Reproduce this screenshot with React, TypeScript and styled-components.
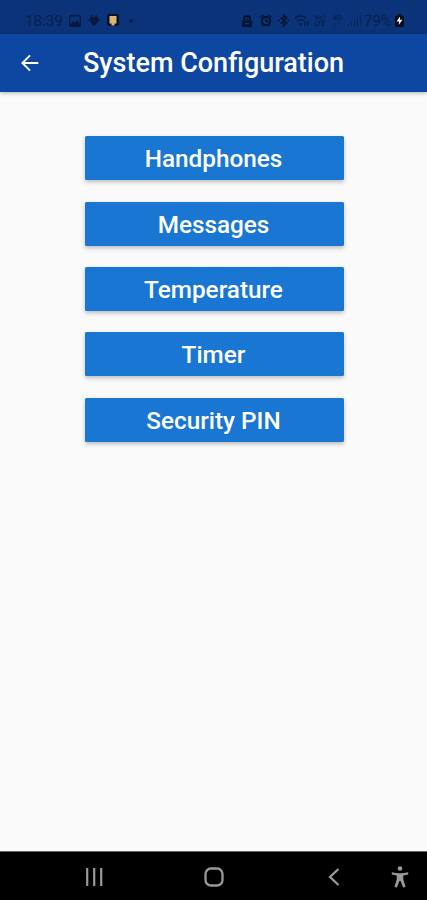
import React from "react";
import styled, { createGlobalStyle } from "styled-components";

const GlobalStyle = createGlobalStyle`
  *, *::before, *::after { box-sizing: border-box; }
  body { margin: 0; background: #fafafa; font-family: Roboto, "Liberation Sans", sans-serif; }
`;

const Screen = styled.div`
  display: flex;
  flex-direction: column;
  width: 427px;
  height: 900px;
  overflow: hidden;
  background: #fafafa;
`;

const StatusBar = styled.div`
  display: flex;
  align-items: center;
  justify-content: space-between;
  flex: none;
  height: 34px;
  padding: 7px 23px 0 25px;
  background: #0a3379;
  color: #07204d;
`;

const StatusGroup = styled.div<{ $gap: number }>`
  display: flex;
  align-items: center;
  gap: ${(p) => p.$gap}px;
`;

const StatusText = styled.span<{ $width: number }>`
  width: ${(p) => p.$width}px;
  font-size: 15.2px;
  line-height: 18px;
  white-space: nowrap;
`;

const NetworkLabel = styled.span`
  width: 14px;
  font-size: 7px;
  font-weight: 500;
  line-height: 6px;
  text-align: center;
`;

const AppBar = styled.header`
  position: relative;
  display: flex;
  align-items: center;
  flex: none;
  height: 58px;
  padding-left: 20px;
  background: #0d47a1;
  box-shadow: 0 1px 4px rgba(0, 0, 0, 0.3);
`;

const BackButton = styled.button`
  display: flex;
  width: 20px;
  padding: 0;
  border: 0;
  background: none;
`;

const Title = styled.h1`
  margin: 0 0 0 43px;
  color: #fff;
  font-size: 27px;
  font-weight: 500;
  line-height: 32px;
  white-space: nowrap;
`;

const Menu = styled.main`
  display: flex;
  flex: 1;
  flex-direction: column;
  align-items: center;
  gap: 21.4px;
  padding: 44.3px 0 0 1px;
`;

const MenuButton = styled.button`
  width: 259px;
  height: 44px;
  padding: 1px 1px 0 0;
  border: 0;
  border-radius: 1.5px;
  background: #1976d2;
  box-shadow: 0 2px 4px rgba(0, 0, 0, 0.25);
  color: #fff;
  font-family: inherit;
  font-size: 24.3px;
  font-weight: 500;
  line-height: 43px;
`;

const NavBar = styled.nav`
  display: grid;
  grid-template-columns: 60px 60px 82px;
  column-gap: 60px;
  align-items: center;
  justify-items: center;
  flex: none;
  height: 49px;
  padding: 2px 0 0 64px;
  border-top: 1px solid #666;
  background: #000;
  color: #999;
`;

const NavEnd = styled.div`
  display: flex;
  align-items: center;
  gap: 51px;
  width: 82px;
  padding-left: 24px;

  svg { flex: none; }
`;

const SignalIcon = () => (
  <svg width="14" height="13" viewBox="0 0 14 13" fill="currentColor">
    <path d="M1 10h1v2H1zM4 8h1v4H4zM7 6h1v6H7zM10 3h1v9h-1zM13 1h1v11h-1z" opacity=".7" />
  </svg>
);

const menuItems = ["Handphones", "Messages", "Temperature", "Timer", "Security PIN"];

export default function App() {
  return (
    <>
      <GlobalStyle />
      <Screen>
        <StatusBar>
          <StatusGroup $gap={7}>
            <StatusText $width={37}>18:39</StatusText>
            <svg width="12" height="12" viewBox="0 0 12 12">
              <rect x=".7" y=".7" width="10.6" height="10.6" rx="1" fill="none" stroke="#061a3d" strokeWidth="1.4" />
              <path d="M1 10l3-4 2 2 2-3 3 5v1H1z" fill="#061a3d" />
            </svg>
            <svg width="12" height="12" viewBox="0 0 12 12" fill="#061a3d">
              <path d="M2 2h8v5L6 11 2 7zM0 4h12v1.5H0zM3 0h1.5v3H3zM7.5 0H9v3H7.5z" />
            </svg>
            <svg width="12" height="13" viewBox="0 0 12 13">
              <rect width="12" height="12" rx="2.5" fill="#0b1220" />
              <path d="M2.5 2h7v7.500h-2V11.500h-3V9.500h-2z" fill="#d9b679" />
            </svg>
            <svg width="12" height="12" viewBox="0 0 12 12"><circle cx="5" cy="6" r="1.7" fill="#061a3d" /></svg>
          </StatusGroup>
          <StatusGroup $gap={3}>
            <StatusGroup $gap={4.5}>
              <svg width="14" height="12" viewBox="0 0 14 12">
                <path d="M3 3q0-3 4-3t4 3v2H3zM2 5.500h10V12H2z" fill="#05142f" />
                <path d="M5 3.500h4M5 8.500h4" stroke="#0a3379" strokeWidth="1.3" />
              </svg>
              <svg width="14" height="13" viewBox="0 0 14 13">
                <circle cx="7" cy="7" r="4.200" fill="none" stroke="#05142f" strokeWidth="2" />
                <path d="M1.500 3l3-2M12.500 3l-3-2M7 4.500V7l2 1M3 12l1-1M11 12l-1-1" fill="none" stroke="#05142f" strokeWidth="1.500" />
              </svg>
              <svg width="14" height="13" viewBox="0 0 14 13" fill="none" stroke="#05142f" strokeWidth="1.500">
                <path d="M3.500 3.500l6 5.500-3 3V1l3 3-6 5.500M1 6.500h1.500M10.500 6.500H12" />
              </svg>
            </StatusGroup>
            <svg width="16" height="13" viewBox="0 0 16 13" fill="none" stroke="currentColor" strokeWidth="1.600">
              <path d="M1 4q5.500-4 11 0M3 7q3.500-2.800 7 0M5.500 9.500L6.500 11l1-1.500M11 12V7M14 7v5" />
            </svg>
            <NetworkLabel>Vo) LTE</NetworkLabel>
            <NetworkLabel>4G ↓↑</NetworkLabel>
            <SignalIcon />
            <StatusGroup $gap={0}>
              <StatusText $width={31}>79%</StatusText>
              <svg width="9" height="13" viewBox="0 0 9 13">
                <path d="M3 0h3v1.500h1.500Q9 2 9 3v8q0 2-2 2H2q-2 0-2-2V3q0-1.500 1.500-1.500H3z" fill="#080d18" />
                <path d="M5 2.500L1.500 7.500H4L3.700 11 7.500 5.800H5z" fill="#e8edf5" />
              </svg>
            </StatusGroup>
          </StatusGroup>
        </StatusBar>
        <AppBar>
          <BackButton aria-label="Back">
            <svg width="20" height="20" viewBox="0 0 20 20" fill="none" stroke="#fff" strokeWidth="1.900">
              <path d="M18.300 10H2.600M10 2.400L2.400 10l7.600 7.600" />
            </svg>
          </BackButton>
          <Title>System Configuration</Title>
        </AppBar>
        <Menu>
          {menuItems.map((item) => (
            <MenuButton key={item}>{item}</MenuButton>
          ))}
        </Menu>
        <NavBar>
          <svg width="18" height="18" viewBox="0 0 18 18" stroke="currentColor" strokeWidth="2.200">
            <path d="M2.200 0v18M9.200 0v18M16.200 0v18" />
          </svg>
          <svg width="20" height="20" viewBox="0 0 20 20" fill="none" stroke="currentColor" strokeWidth="2.300">
            <rect x="1.500" y="1.500" width="17" height="17" rx="5.500" />
          </svg>
          <NavEnd>
            <svg width="12" height="18" viewBox="0 0 12 18" fill="none" stroke="currentColor" strokeWidth="2.300">
              <path d="M10.500 1L2 9l8.500 8" />
            </svg>
            <svg width="18" height="22" viewBox="0 0 18 22" fill="currentColor">
              <circle cx="9" cy="2.500" r="2.300" />
              <path d="M.8 6.300Q9 8 17.200 6.300v2.200L12.300 9.500v3.700L14.500 21l-2.400.6L9.600 15H8.400l-2.500 6.600L3.500 21l2.200-7.800V9.500L.8 8.500z" />
            </svg>
          </NavEnd>
        </NavBar>
      </Screen>
    </>
  );
}
